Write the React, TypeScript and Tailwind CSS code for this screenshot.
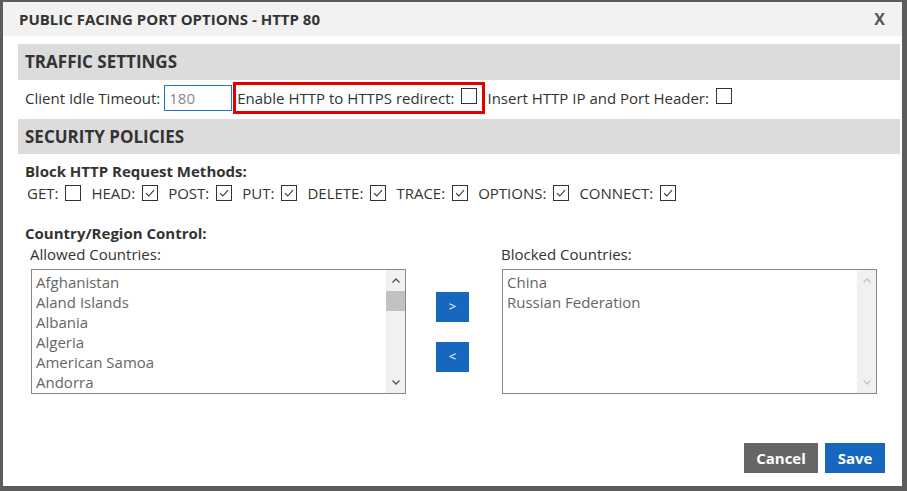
import React from "react";

const ALLOWED = ["Afghanistan", "Aland Islands", "Albania", "Algeria", "American Samoa", "Andorra"];
const BLOCKED = ["China", "Russian Federation"];
const METHODS: [string, boolean][] = [
  ["GET:", false],
  ["HEAD:", true],
  ["POST:", true],
  ["PUT:", true],
  ["DELETE:", true],
  ["TRACE:", true],
  ["OPTIONS:", true],
  ["CONNECT:", true],
];

function Box({ checked }: { checked?: boolean }) {
  return (
    <span className="inline-flex h-[16px] w-[16px] shrink-0 items-center justify-center border border-[#333] bg-white">
      {checked && (
        <svg viewBox="0 0 14 14" className="h-[14px] w-[14px]">
          <path d="M3 7.2 L5.8 10 L11 4.2" fill="none" stroke="#333" strokeWidth="1.1" />
        </svg>
      )}
    </span>
  );
}

function Chevron({ up, color }: { up?: boolean; color: string }) {
  return (
    <svg viewBox="0 0 8 5" className="h-[5px] w-[8px]">
      <path d={up ? "M0.5 4.5 L4 1 L7.5 4.5" : "M0.5 0.5 L4 4 L7.5 0.5"} fill="none" stroke={color} strokeWidth="1.3" />
    </svg>
  );
}

function ListBox({ items, active }: { items: string[]; active?: boolean }) {
  const arrow = active ? "#505050" : "#c3c3c3";
  return (
    <div className="flex h-[125px] w-[375px] border border-[#888] bg-white">
      <div className="flex-1 overflow-hidden pl-[4px] pt-[2px] text-[15px] leading-[20px] text-[#666]">
        {items.map((c) => (
          <div key={c}>{c}</div>
        ))}
      </div>
      <div className="flex w-[19px] flex-col bg-[#f1f1f1]">
        <div className="flex h-[21px] items-center justify-center">
          <Chevron up color={arrow} />
        </div>
        {active && <div className="h-[20px] bg-[#c1c1c1]" />}
        <div className="flex-1" />
        <div className="flex h-[21px] items-center justify-center">
          <Chevron color={arrow} />
        </div>
      </div>
    </div>
  );
}

function SectionHeader({ title }: { title: string }) {
  return (
    <div className="flex h-full items-center bg-[#dcdcdc] px-[7px] text-[17px] font-bold text-[#333]">{title}</div>
  );
}

export default function App() {
  return (
    <div className="h-[491px] w-[907px] bg-[#5c5c5c] pb-[5px] pl-[3px] pr-[5px] pt-[2px] font-['Open_Sans',sans-serif] text-[15px] text-[#333]">
      <div className="flex h-full flex-col bg-white">
        <div className="flex h-[34px] shrink-0 items-center justify-between bg-[#f2f2f2] pl-[16px] pr-[17px]">
          <span className="text-[15px] font-bold text-[#333]">PUBLIC FACING PORT OPTIONS - HTTP 80</span>
          <span className="text-[16px] font-bold text-[#555]">X</span>
        </div>

        <div className="flex flex-col pl-[15px] pr-[2px]">
          <div className="mt-[8px] h-[36px]">
            <SectionHeader title="TRAFFIC SETTINGS" />
          </div>

          <div className="mt-[2px] flex h-[32px] items-center pl-[7px] leading-[20px]">
            <span>Client Idle Timeout:</span>
            <span className="ml-[4px] flex h-[26px] w-[68px] items-center border border-[#1e78c8] pl-[4px] text-[#888]">
              180
            </span>
            <span className="ml-[1px] flex h-[32px] items-center border-[3px] border-[#e00000] pl-[1px] pr-[5px]">
              <span>Enable HTTP to HTTPS redirect:</span>
              <span className="ml-[7px]">
                <Box />
              </span>
            </span>
            <span className="ml-[2px]">Insert HTTP IP and Port Header:</span>
            <span className="ml-[7px]">
              <Box />
            </span>
          </div>

          <div className="mt-[5px] h-[35px]">
            <SectionHeader title="SECURITY POLICIES" />
          </div>

          <div className="mt-[7px] pl-[7px] font-bold leading-[20px]">Block HTTP Request Methods:</div>
          <div className="mt-[2px] flex h-[20px] items-center gap-[10px] pl-[9px]">
            {METHODS.map(([m, c]) => (
              <span key={m} className="flex items-center gap-[7px]">
                <span>{m}</span>
                <Box checked={c} />
              </span>
            ))}
          </div>

          <div className="mt-[20px] pl-[7px] font-bold leading-[20px]">Country/Region Control:</div>
          <div className="mt-[1px] flex pl-[13px]">
            <div className="flex flex-col">
              <span className="-ml-[1px] leading-[20px]">Allowed Countries:</span>
              <div className="mt-[5px]">
                <ListBox items={ALLOWED} active />
              </div>
            </div>
            <div className="ml-[30px] flex flex-col gap-[20px] pt-[48px]">
              <button className="flex h-[30px] w-[33px] items-center justify-center bg-[#1767be] text-[13px] text-white">
                &gt;
              </button>
              <button className="flex h-[30px] w-[33px] items-center justify-center bg-[#1767be] text-[13px] text-white">
                &lt;
              </button>
            </div>
            <div className="ml-[33px] flex flex-col">
              <span className="-ml-[1px] leading-[20px]">Blocked Countries:</span>
              <div className="mt-[5px]">
                <ListBox items={BLOCKED} />
              </div>
            </div>
          </div>
        </div>

        <div className="mt-auto flex justify-end gap-[7px] pb-[13px] pr-[17px]">
          <button className="flex h-[30px] w-[74px] items-center justify-center bg-[#666] text-[15px] font-bold text-white">
            Cancel
          </button>
          <button className="flex h-[30px] w-[60px] items-center justify-center bg-[#1767be] text-[15px] font-bold text-white">
            Save
          </button>
        </div>
      </div>
    </div>
  );
}
